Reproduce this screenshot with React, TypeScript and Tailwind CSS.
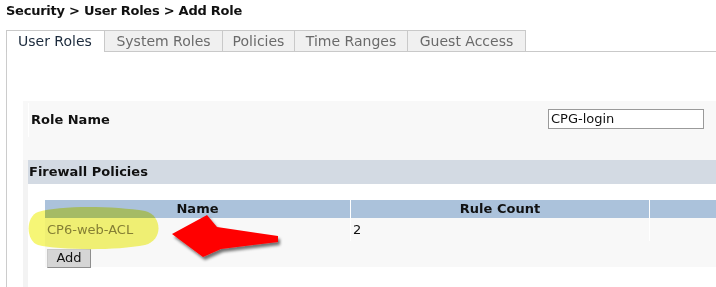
import React from "react";

const tabs = [
  { label: "User Roles", w: "w-[99px]", active: true },
  { label: "System Roles", w: "w-[118px]" },
  { label: "Policies", w: "w-[72px]" },
  { label: "Time Ranges", w: "w-[113px]" },
  { label: "Guest Access", w: "w-[118px]" },
];

export default function App() {
  return (
    <div className="relative w-[716px] h-[287px] overflow-hidden bg-white font-['DejaVu_Sans',Verdana,sans-serif] text-[#111]">
      {/* Breadcrumb */}
      <div className="h-[30px] pl-[6px] pt-[1px] text-[13px] font-bold leading-[20px] tracking-[-0.25px] text-[#111]">
        Security &gt; User Roles &gt; Add Role
      </div>

      {/* Tabs */}
      <div className="flex h-[22px] pl-[6px]">
        {tabs.map((t, i) =>
          t.active ? (
            <div
              key={i}
              className={`${t.w} h-[22px] border-l border-t border-r border-[#c9c9c9] bg-white pl-[11px] text-[14px] leading-[21px] text-[#1b2a3c]`}
            >
              {t.label}
            </div>
          ) : (
            <div
              key={i}
              className={`${t.w} h-[22px] border-t border-r border-b border-[#c9c9c9] bg-[#f0f0f0] text-center text-[14px] leading-[20px] text-[#6a6a6a]`}
            >
              {t.label}
            </div>
          )
        )}
        <div className="flex-1 border-b border-[#c9c9c9]" />
      </div>

      {/* Content area */}
      <div className="ml-[6px] h-[236px] border-l border-[#cccccc] pt-[49px] pl-[16px]">
        <div className="h-full bg-[#f3f3f3]">
          {/* Role name row */}
          <div className="flex h-[59px] bg-[#f8f8f8] pl-[5px]">
            <div className="mt-[2px] flex h-[34px] items-center border-l border-white pl-[2px] text-[13px] font-bold">
              Role Name
            </div>
            <div className="ml-auto mt-[8px] mr-[12px] h-[20px] w-[156px] border border-[#9a9a9a] bg-white pl-[2px] text-[13px] leading-[18px] text-[#111]">
              CPG-login
            </div>
          </div>

          {/* Firewall policies */}
          <div className="ml-[5px] h-full bg-white">
            <div className="flex h-[24px] items-center bg-[#d3dae3] pl-[1px] text-[13px] font-bold">
              Firewall Policies
            </div>
            <div className="pt-[16px] pl-[17px]">
              <div className="bg-[#f8f8f8] h-[67px]">
                <div className="flex h-[18px] bg-[#abc2db] text-[13px] font-bold leading-[18px]">
                  <div className="w-[305px] text-center">Name</div>
                  <div className="w-[299px] border-l border-white text-center">Rule Count</div>
                  <div className="flex-1 border-l border-white" />
                </div>
                <div className="flex h-[23px] text-[13px] leading-[23px]">
                  <div className="w-[305px] pl-[2px] text-[#8a8470]">CP6-web-ACL</div>
                  <div className="w-[299px] border-l border-white pl-[2px]">2</div>
                  <div className="flex-1 border-l border-white" />
                </div>
                <div className="pl-[2px] pt-[4px]">
                  <button className="h-[19px] w-[44px] border border-[#8e8e8e] border-t-[#c8c8c8] border-l-[#c8c8c8] bg-[#d5d5d5] text-[13px] leading-[16px] text-[#111]">
                    Add
                  </button>
                </div>
              </div>
            </div>
          </div>
        </div>
      </div>

      {/* Annotations overlay */}
      <svg
        className="pointer-events-none absolute left-0 top-0"
        width="716"
        height="287"
        viewBox="0 0 716 287"
      >
        <defs>
          <filter id="sh" x="-20%" y="-20%" width="140%" height="160%">
            <feGaussianBlur in="SourceAlpha" stdDeviation="1.6" />
            <feOffset dx="2" dy="2.5" result="b" />
            <feComponentTransfer>
              <feFuncA type="linear" slope="0.55" />
            </feComponentTransfer>
            <feMerge>
              <feMergeNode />
              <feMergeNode in="SourceGraphic" />
            </feMerge>
          </filter>
        </defs>
        <path
          d="M38 212 C 60 205, 115 206, 145 211 C 162 215, 164 240, 145 245 C 115 251, 58 250, 38 245 C 26 241, 25 217, 38 212 Z"
          fill="#f6f66a"
          opacity="0.92"
          style={{ mixBlendMode: "multiply" }}
        />
        <path
          d="M172 234 L207 215 L217 227 L278 236 L278 242 L221 249 L203 257 Z"
          fill="#ff0000"
          filter="url(#sh)"
        />
      </svg>
    </div>
  );
}
